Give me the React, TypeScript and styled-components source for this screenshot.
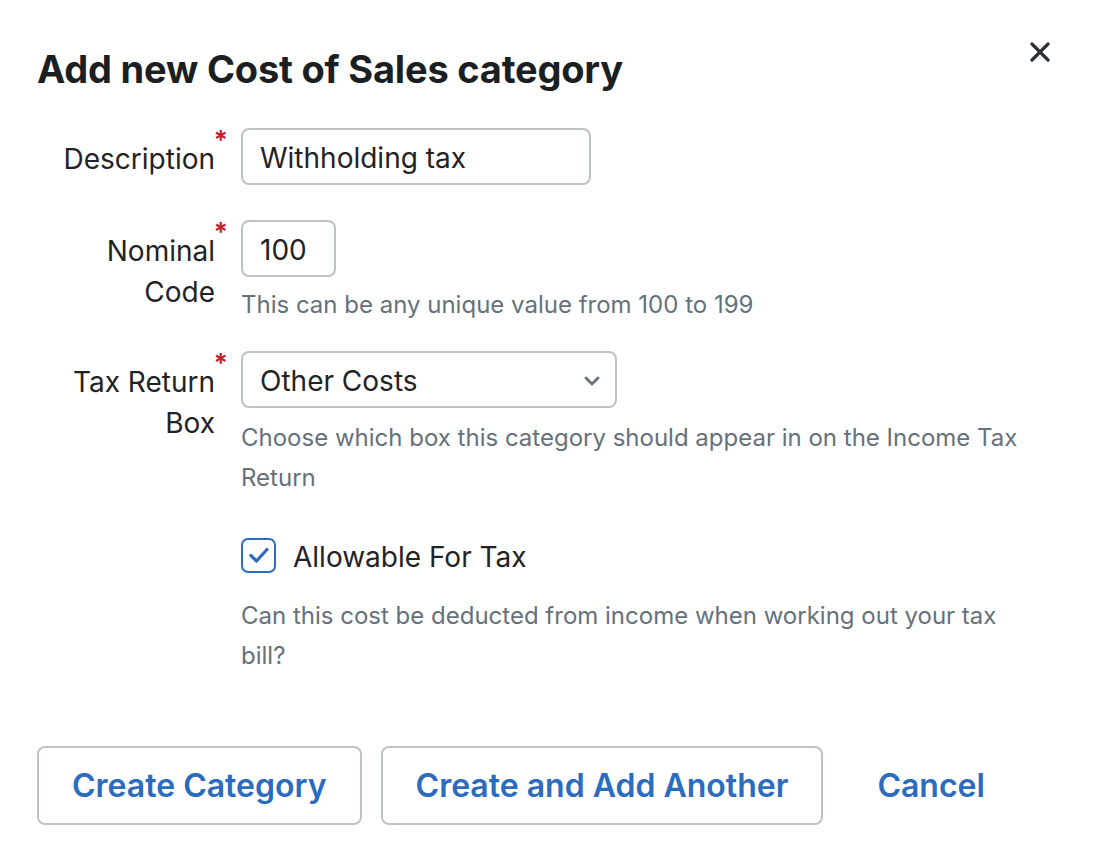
import React from "react";
import styled, { createGlobalStyle } from "styled-components";

const Global = createGlobalStyle`
  html, body { margin: 0; padding: 0; background: #ffffff; }
  body { font-family: Inter, "Noto Sans", sans-serif; color: #1f2326; }
  * { box-sizing: border-box; }
`;

const Page = styled.div`
  width: 1100px;
  padding: 0 37px;
`;

const Header = styled.header`
  display: flex;
  justify-content: space-between;
  align-items: flex-start;
  padding-top: 44px;
`;

const Title = styled.h1`
  margin: 0;
  font-size: 38px;
  line-height: 50px;
  font-weight: 700;
  letter-spacing: -0.2px;
  color: #1c1f22;
`;

const Close = styled.button`
  border: 0;
  background: transparent;
  padding: 0;
  margin: -5px 10px 0 0;
  width: 26px;
  height: 26px;
  display: flex;
  align-items: center;
  justify-content: center;
  cursor: pointer;
`;

const Form = styled.form`
  margin-top: 34px;
  display: flex;
  flex-direction: column;
`;

const Row = styled.div<{ $gap: number }>`
  display: grid;
  grid-template-columns: 191px 795px;
  column-gap: 13px;
  margin-bottom: ${(p) => p.$gap}px;
`;

const Label = styled.label`
  position: relative;
  padding: 11px 13px 0 0;
  text-align: right;
  font-size: 28px;
  line-height: 41px;
  color: #1f2326;
`;

const Req = styled.span`
  position: absolute;
  right: 0;
  top: 0;
  color: #c0262d;
  font-size: 26px;
  line-height: 24px;
  font-weight: 700;
`;

const Field = styled.div`
  display: flex;
  flex-direction: column;
  align-items: flex-start;
`;

const Input = styled.input<{ $w: number }>`
  width: ${(p) => p.$w}px;
  height: 57px;
  border: 2px solid #bcc2c8;
  border-radius: 8px;
  padding: 3px 17px 0;
  font-family: inherit;
  font-size: 28px;
  color: #1f2326;
  outline: none;
  background: #fff;
`;

const SelectBox = styled.div`
  position: relative;
  width: 376px;
  height: 57px;
  border: 2px solid #bcc2c8;
  border-radius: 8px;
  padding: 3px 14px 0 17px;
  display: flex;
  align-items: center;
  justify-content: space-between;
  font-size: 28px;
  color: #1f2326;
`;

const Help = styled.p<{ $mt: number }>`
  margin: ${(p) => p.$mt}px 0 0;
  font-size: 24px;
  line-height: 40px;
  color: #65717b;
`;

const CheckRow = styled.label`
  display: flex;
  align-items: center;
  gap: 17px;
  font-size: 28px;
  color: #1f2326;
`;

const CheckText = styled.span`
  padding-top: 4px;
`;

const CheckBox = styled.span`
  width: 35px;
  height: 35px;
  border: 2px solid #2c6dbd;
  border-radius: 7px;
  display: flex;
  align-items: center;
  justify-content: center;
`;

const Actions = styled.div`
  display: flex;
  gap: 19px;
  margin-top: 70px;
`;

const Button = styled.button<{ $plain?: boolean }>`
  height: 79px;
  padding: 0 33px;
  border: 2px solid ${(p) => (p.$plain ? "transparent" : "#bcc2c8")};
  border-radius: 8px;
  background: #fff;
  color: #2b6cbf;
  font-family: inherit;
  font-size: 32px;
  font-weight: 600;
  cursor: pointer;
`;

export default function App() {
  return (
    <Page>
      <Global />
      <Header>
        <Title>Add new Cost of Sales category</Title>
        <Close aria-label="Close">
          <svg width="20" height="20" viewBox="0 0 20 20">
            <path d="M2 2 L18 18 M18 2 L2 18" stroke="#2a3237" strokeWidth="3.2" strokeLinecap="round" />
          </svg>
        </Close>
      </Header>
      <Form>
        <Row $gap={35}>
          <Label>
            Description<Req>*</Req>
          </Label>
          <Field>
            <Input $w={350} defaultValue="Withholding tax" />
          </Field>
        </Row>
        <Row $gap={26}>
          <Label>
            Nominal Code<Req>*</Req>
          </Label>
          <Field>
            <Input $w={95} defaultValue="100" />
            <Help $mt={8}>This can be any unique value from 100 to 199</Help>
          </Field>
        </Row>
        <Row $gap={38}>
          <Label>
            Tax Return Box<Req>*</Req>
          </Label>
          <Field>
            <SelectBox>
              <span>Other Costs</span>
              <svg width="18" height="12" viewBox="0 0 18 12">
                <path d="M3 3 L9 9 L15 3" stroke="#6b7680" strokeWidth="3" fill="none" strokeLinecap="round" strokeLinejoin="round" />
              </svg>
            </SelectBox>
            <Help $mt={10}>Choose which box this category should appear in on the Income Tax Return</Help>
          </Field>
        </Row>
        <Row $gap={0}>
          <span />
          <Field>
            <CheckRow>
              <CheckBox>
                <svg width="22" height="18" viewBox="0 0 22 18">
                  <path d="M3 9.5 L8.5 15 L19 3.5" stroke="#2c6dbd" strokeWidth="3.2" fill="none" strokeLinecap="round" strokeLinejoin="round" />
                </svg>
              </CheckBox>
              <CheckText>Allowable For Tax</CheckText>
            </CheckRow>
            <Help $mt={22}>Can this cost be deducted from income when working out your tax bill?</Help>
          </Field>
        </Row>
        <Actions>
          <Button type="button">Create Category</Button>
          <Button type="button">Create and Add Another</Button>
          <Button type="button" $plain>Cancel</Button>
        </Actions>
      </Form>
    </Page>
  );
}
